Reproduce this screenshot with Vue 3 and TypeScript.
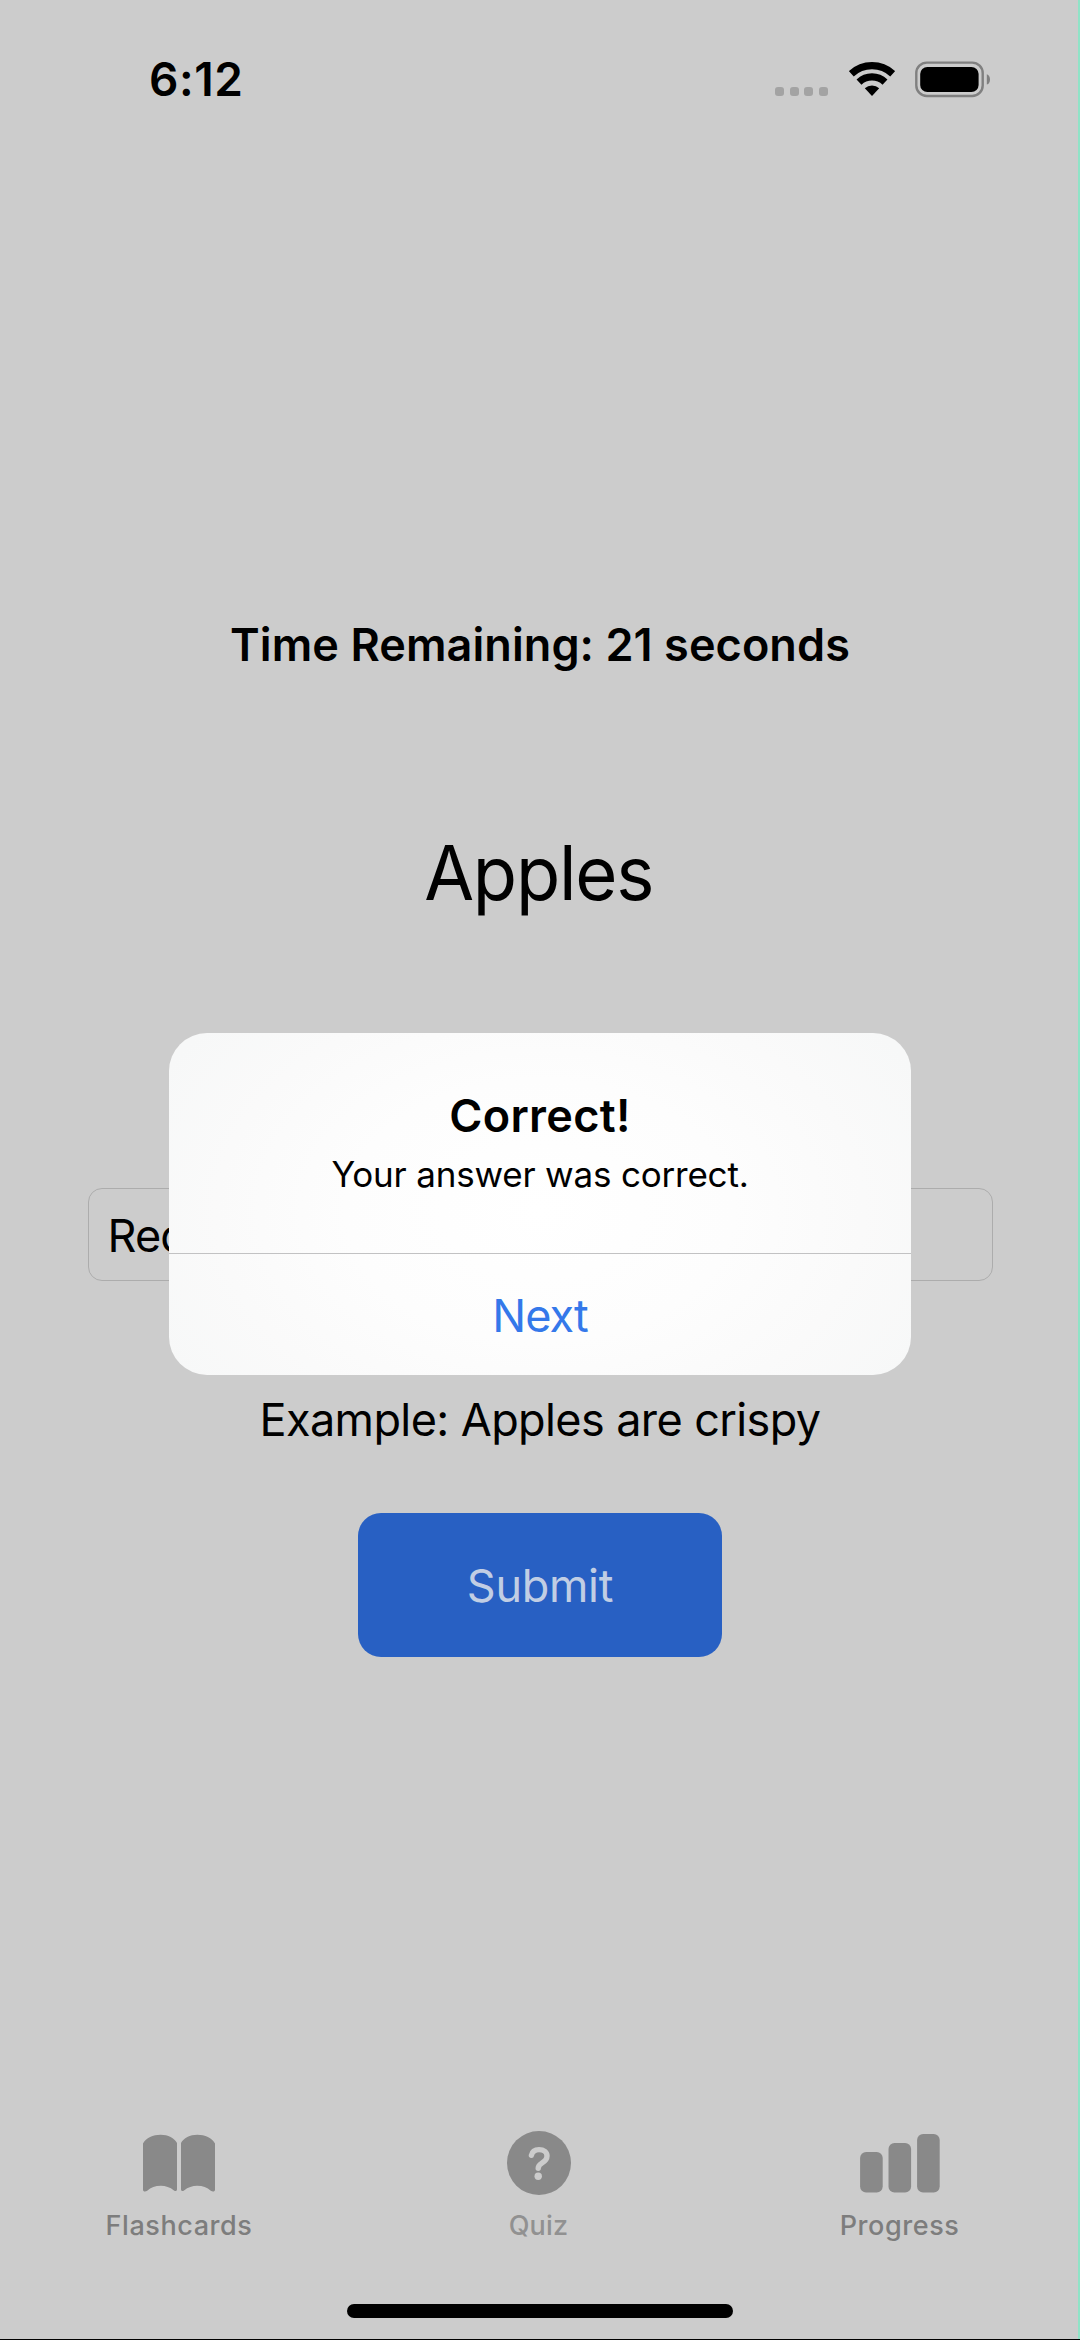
<script setup lang="ts">
import { ref } from 'vue'

const time = ref('6:12')
const secondsLeft = ref(21)
const word = ref('Apples')
const answer = ref('Red')
const example = ref('Apples are crispy')
const showAlert = ref(true)
</script>

<template>
  <div class="screen">
    <header class="status">
      <span class="clock">{{ time }}</span>
      <div class="indicators">
        <div class="signal"><i v-for="n in 4" :key="n"></i></div>
        <svg class="wifi" width="46" height="35" viewBox="0 0 46 35">
          <g fill="none" stroke="#000" stroke-width="7.2">
            <path d="M2.3 11.8A30.4 30.4 0 0 1 43.7 11.8" />
            <path d="M10 20.1A19 19 0 0 1 36 20.1" />
          </g>
          <path d="M23 34L15.8 26.3A10.5 10.5 0 0 1 30.2 26.3Z" />
        </svg>
        <svg class="battery" width="76" height="37" viewBox="0 0 76 37">
          <rect x="1.3" y="1.6" width="66.4" height="33.4" rx="10.5" fill="none" stroke="#808080" stroke-width="2.4" />
          <rect x="5.2" y="5.9" width="58.4" height="25.2" rx="7.2" />
          <path d="M71.8 13.2C74 14 75 16 75 18.4S74 22.8 71.8 23.6Z" fill="#808080" />
        </svg>
      </div>
    </header>

    <main class="quiz">
      <h2 class="timer">Time Remaining: {{ secondsLeft }} seconds</h2>
      <h1 class="word">{{ word }}</h1>
      <div class="field">{{ answer }}</div>
      <p class="example">Example: {{ example }}</p>
      <button class="submit" type="button">Submit</button>
    </main>

    <nav class="tabs">
      <div class="tab first">
        <div class="icon">
          <svg width="72" height="58" viewBox="0 0 72 58">
            <path d="M0 9.5C3 4 10 .7 17.7 .7C25 .7 31.5 4 34 9V55.2C34 57 32.5 57.6 31 56.4C27 53.4 22.5 51.8 18 51.8C12 51.8 8 53.6 4.2 56.8C2 58.2 0 57.5 0 55.8Z" />
            <path transform="translate(72 0) scale(-1 1)" d="M0 9.5C3 4 10 .7 17.7 .7C25 .7 31.5 4 34 9V55.2C34 57 32.5 57.6 31 56.4C27 53.4 22.5 51.8 18 51.8C12 51.8 8 53.6 4.2 56.8C2 58.2 0 57.5 0 55.8Z" />
          </svg>
        </div>
        <span class="label">Flashcards</span>
      </div>
      <div class="tab">
        <div class="icon">
          <svg width="64" height="64" viewBox="0 0 64 64">
            <circle cx="32" cy="32" r="32" />
            <path class="mark" d="M24.4 24.3C25.2 20.4 28 18.6 32 18.6C36.8 18.6 40 21 40 25C40 28.6 37.8 30.3 35 32C32.3 33.7 31.2 35 31.2 37.2" />
            <circle class="dot" cx="31.2" cy="45.2" r="3.7" />
          </svg>
        </div>
        <span class="label active">Quiz</span>
      </div>
      <div class="tab">
        <div class="icon">
          <svg width="80" height="59" viewBox="0 0 80 59">
            <rect x="0.1" y="18" width="22.6" height="40.5" rx="6" />
            <rect x="28.5" y="9" width="22.6" height="49.5" rx="6" />
            <rect x="57.1" y="0" width="22.6" height="58.5" rx="6" />
          </svg>
        </div>
        <span class="label">Progress</span>
      </div>
    </nav>
    <div class="home"><div class="home-bar"></div></div>

    <div v-if="showAlert" class="overlay">
      <section class="alert" role="alertdialog">
        <div class="alert-body">
          <h3>Correct!</h3>
          <p>Your answer was correct.</p>
        </div>
        <button class="next" type="button">Next</button>
      </section>
    </div>
    <div class="edge"></div>
  </div>
</template>

<style scoped>
.screen {
  position: relative;
  display: flex;
  flex-direction: column;
  box-sizing: border-box;
  width: 1080px;
  height: 2340px;
  overflow: hidden;
  background: #cccccc;
  border-bottom: 1px solid #000;
  color: #000;
  font-family: Inter, sans-serif;
}
h1, h2, h3, p { margin: 0; }
button { border: 0; padding: 0; font-family: inherit; }

.status {
  display: flex;
  justify-content: space-between;
  height: 120px;
  box-sizing: border-box;
  padding: 52px 89px 0 149px;
}
.clock { font-size: 46px; font-weight: 600; line-height: 55px; letter-spacing: 0.6px; }
.indicators { display: flex; align-items: flex-start; }
.signal { display: flex; gap: 5.7px; margin: 35px 20.5px 0 0; }
.signal i { width: 9px; height: 9px; border-radius: 3px; background: #a3a3a3; }
.wifi { margin: 10px 20.5px 0 0; }
.battery { margin-top: 9px; }

.quiz {
  flex: 1;
  display: flex;
  flex-direction: column;
  align-items: center;
  padding-top: 498px;
}
.timer { font-size: 45px; font-weight: 600; line-height: 54px; letter-spacing: 0.08px; white-space: nowrap; }
.word {
  margin: 156px 2px 0 0;
  font-size: 75px;
  font-weight: 400;
  line-height: 90px;
  letter-spacing: -1.3px;
  transform: scaleX(0.965);
}
.field {
  box-sizing: border-box;
  width: 905px;
  height: 93px;
  margin-top: 270px;
  padding-left: 19px;
  border: 1px solid #acacac;
  border-radius: 14px;
  font-size: 45px;
  line-height: 94px;
  letter-spacing: -0.9px;
}
.example { margin-top: 112px; font-size: 45px; line-height: 54px; letter-spacing: -0.6px; white-space: nowrap; }
.submit {
  width: 364px;
  height: 144px;
  margin-top: 66px;
  border-radius: 23px;
  background: #2860c3;
  color: #c1cee4;
  font-size: 45px;
  line-height: 146px;
  letter-spacing: -0.3px;
}

.tabs { display: flex; height: 173px; fill: #898989; }
.tab { display: flex; flex-direction: column; align-items: center; width: 361px; }
.tab.first { width: 358px; }
.icon { display: flex; align-items: center; height: 64px; }
.icon svg { display: block; }
.mark { fill: none; stroke: #cccccc; stroke-width: 5.4; stroke-linecap: round; }
.dot { fill: #cccccc; }
.label { margin-top: 14px; font-size: 27px; font-weight: 500; line-height: 34px; letter-spacing: 0.57px; color: #7d7d7d; }
.label.active { letter-spacing: 0.2px; color: #919191; }

.home { display: flex; justify-content: center; height: 35px; }
.home-bar { width: 386px; height: 14px; border-radius: 7px; background: #000; }

.overlay {
  position: absolute;
  inset: 0;
  display: flex;
  justify-content: center;
  align-items: flex-start;
  padding-top: 1033px;
}
.alert {
  display: flex;
  flex-direction: column;
  width: 742px;
  height: 342px;
  border-radius: 38px;
  overflow: hidden;
  background: radial-gradient(ellipse 58% 85% at 50% 52%, #ffffff 0%, #fdfdfd 45%, #fafafa 75%, #f7f8f8 100%);
  text-align: center;
}
.alert-body { box-sizing: border-box; height: 221px; padding-top: 55px; border-bottom: 1px solid #c2c2c3; }
.alert-body h3 { font-size: 45px; font-weight: 600; line-height: 55px; letter-spacing: 0.3px; }
.alert-body p { margin-top: 10px; font-size: 35px; line-height: 43px; letter-spacing: -0.2px; }
.next { height: 121px; background: none; color: #3478ea; font-size: 45px; line-height: 124px; letter-spacing: -0.9px; }

.edge { position: absolute; top: 0; right: 0; bottom: 0; width: 2px; background: #90e3c7; }
</style>

<style>
body { margin: 0; }
</style>
